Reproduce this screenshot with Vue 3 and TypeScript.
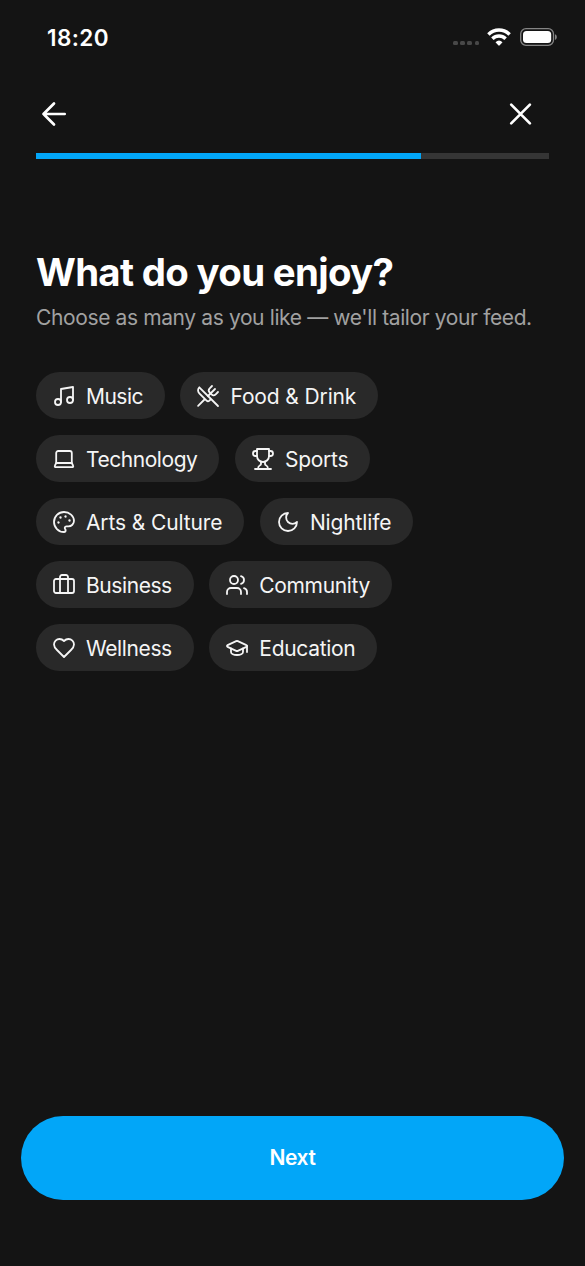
<script setup lang="ts">
interface Interest {
  label: string
  tracking: number
  paths: string[]
}

const rows: Interest[][] = [
  [
    {
      label: 'Music',
      tracking: -0.52,
      paths: ['M9 18V5l12-2v13', 'M3 18a3 3 0 1 0 6 0a3 3 0 1 0-6 0', 'M15 16a3 3 0 1 0 6 0a3 3 0 1 0-6 0'],
    },
    {
      label: 'Food & Drink',
      tracking: -0.13,
      paths: [
        'm16 2-2.3 2.3a3 3 0 0 0 0 4.2l1.8 1.8a3 3 0 0 0 4.2 0L22 8',
        'M15 15 3.3 3.3a4.2 4.2 0 0 0 0 6l7.3 7.3c.7.7 2 .7 2.8 0L15 15Zm0 0 7 7',
        'm2.1 21.8 6.4-6.3',
        'm19 5-7 7',
      ],
    },
  ],
  [
    {
      label: 'Technology',
      tracking: -0.45,
      paths: [
        'M6.2 4h11.6a2 2 0 0 1 2 2v10H4.2V6a2 2 0 0 1 2-2Z',
        'M4.2 16 2.9 18.7a1 1 0 0 0 .9 1.5h16.4a1 1 0 0 0 .9-1.5L19.8 16',
      ],
    },
    {
      label: 'Sports',
      tracking: -0.27,
      paths: [
        'M6 9H4.5a2.5 2.5 0 0 1 0-5H6',
        'M18 9h1.5a2.5 2.5 0 0 0 0-5H18',
        'M4 22h16',
        'M10 14.66V17c0 .55-.47.98-.97 1.21C7.85 18.75 7 20.24 7 22',
        'M14 14.66V17c0 .55.47.98.97 1.21C16.15 18.75 17 20.24 17 22',
        'M18 2H6v7a6 6 0 0 0 12 0V2Z',
      ],
    },
  ],
  [
    {
      label: 'Arts & Culture',
      tracking: -0.12,
      paths: [
        'M12 2C6.5 2 2 6.5 2 12s4.5 10 10 10c.926 0 1.648-.746 1.648-1.688 0-.437-.18-.835-.437-1.125-.29-.289-.438-.652-.438-1.125a1.64 1.64 0 0 1 1.668-1.668h1.996c3.051 0 5.555-2.503 5.555-5.554C21.965 6.012 17.461 2 12 2Z',
        'M13.2 6.5a.3.3 0 1 0 .6 0a.3.3 0 1 0-.6 0',
        'M17.2 10.5a.3.3 0 1 0 .6 0a.3.3 0 1 0-.6 0',
        'M8.2 7.5a.3.3 0 1 0 .6 0a.3.3 0 1 0-.6 0',
        'M6.2 12.5a.3.3 0 1 0 .6 0a.3.3 0 1 0-.6 0',
      ],
    },
    { label: 'Nightlife', tracking: -0.14, paths: ['M12 3a6 6 0 0 0 9 9 9 9 0 1 1-9-9Z'] },
  ],
  [
    {
      label: 'Business',
      tracking: -0.42,
      paths: [
        'M16 20V4a2 2 0 0 0-2-2h-4a2 2 0 0 0-2 2v16',
        'M4 6h16a2 2 0 0 1 2 2v10a2 2 0 0 1-2 2H4a2 2 0 0 1-2-2V8a2 2 0 0 1 2-2Z',
      ],
    },
    {
      label: 'Community',
      tracking: -0.34,
      paths: [
        'M16 21v-2a4 4 0 0 0-4-4H6a4 4 0 0 0-4 4v2',
        'M5 7a4 4 0 1 0 8 0a4 4 0 1 0-8 0',
        'M22 21v-2a4 4 0 0 0-3-3.87',
        'M16 3.13a4 4 0 0 1 0 7.75',
      ],
    },
  ],
  [
    {
      label: 'Wellness',
      tracking: -0.38,
      paths: [
        'M19 14c1.49-1.46 3-3.21 3-5.5A5.5 5.5 0 0 0 16.5 3c-1.76 0-3 .5-4.5 2-1.5-1.5-2.74-2-4.5-2A5.5 5.5 0 0 0 2 8.5c0 2.3 1.5 4.05 3 5.5l7 7Z',
      ],
    },
    {
      label: 'Education',
      tracking: -0.3,
      paths: [
        'M21.42 10.922a1 1 0 0 0-.019-1.838L12.83 5.18a2 2 0 0 0-1.66 0L2.6 9.08a1 1 0 0 0 0 1.832l8.57 3.908a2 2 0 0 0 1.66 0Z',
        'M22 10v6',
        'M6 12.5V16a6 3 0 0 0 12 0v-3.5',
      ],
    },
  ],
]

const progress = 75
</script>

<template>
  <main class="screen">
    <header class="status">
      <span class="time">18:20</span>
      <div class="indicators">
        <div class="dots"><i v-for="n in 4" :key="n"></i></div>
        <svg class="wifi" width="24" height="18" viewBox="0 0 24 18">
          <g fill="none" stroke="#fff" stroke-width="3.5">
            <path d="M1.4 6.4A15.2 15.2 0 0 1 22.6 6.4" />
            <path d="M5.4 10.8A9.4 9.4 0 0 1 18.6 10.8" />
          </g>
          <path d="M8.5 14.2A5.2 5.2 0 0 1 15.5 14.2L12.7 17.3Q12 18 11.3 17.3Z" fill="#fff" />
        </svg>
        <svg class="battery" width="38" height="18" viewBox="0 0 38 18">
          <rect x=".7" y=".7" width="32.8" height="16.6" rx="5.3" fill="none" stroke="#858585" stroke-width="1.3" />
          <rect x="3" y="3" width="28.2" height="12" rx="3.5" fill="#fff" />
          <path d="M35 6.2c2.4.8 2.4 4.8 0 5.6Z" fill="#858585" />
        </svg>
      </div>
    </header>

    <nav class="nav">
      <button class="icon-button" aria-label="Back">
        <svg width="36" height="36" viewBox="0 0 36 36"><path d="M18 7.5 7.5 18 18 28.5M7.5 18h21.2" /></svg>
      </button>
      <button class="icon-button" aria-label="Close">
        <svg width="36" height="36" viewBox="0 0 36 36"><path d="m8.2 8.6 18.7 18.8M26.9 8.6 8.2 27.4" /></svg>
      </button>
    </nav>

    <div class="track"><div class="bar" :style="{ width: progress + '%' }"></div></div>

    <section class="content">
      <h1>What do you enjoy?</h1>
      <p>Choose as many as you like — we'll tailor your feed.</p>
      <div class="rows">
        <div v-for="(row, i) in rows" :key="i" class="row">
          <button v-for="item in row" :key="item.label" class="chip">
            <svg width="24" height="24" viewBox="0 0 24 24">
              <path v-for="d in item.paths" :key="d" :d="d" />
            </svg>
            <span :style="{ letterSpacing: item.tracking + 'px' }">{{ item.label }}</span>
          </button>
        </div>
      </div>
    </section>

    <button class="next">Next</button>
  </main>
</template>

<style>
body {
  margin: 0;
  background: #141414;
}
</style>

<style scoped>
.screen {
  box-sizing: border-box;
  width: 585px;
  height: 1266px;
  display: flex;
  flex-direction: column;
  background: #141414;
  color: #fff;
  font-family: Inter, 'Liberation Sans', sans-serif;
  overflow: hidden;
}
button {
  border: 0;
  padding: 0;
  margin: 0;
  color: inherit;
  font-family: inherit;
  background: none;
}
svg {
  display: block;
  flex: none;
}
.status {
  display: flex;
  justify-content: space-between;
  height: 50px;
  padding: 24px 27px 0 47px;
  box-sizing: border-box;
}
.time {
  font-size: 22.5px;
  line-height: 27px;
  font-weight: 600;
  letter-spacing: 0.4px;
}
.indicators {
  display: flex;
  height: 26px;
  align-items: center;
}
.dots {
  display: flex;
  gap: 2.6px;
  margin: 12px 8px 0 0;
}
.dots i {
  width: 4.5px;
  height: 4.5px;
  border-radius: 1.5px;
  background: #484848;
}
.wifi {
  margin-right: 9px;
}
.nav {
  display: flex;
  justify-content: space-between;
  margin: 46px 46px 0 36px;
}
.icon-button {
  width: 36px;
  height: 36px;
}
.icon-button path {
  fill: none;
  stroke: #fff;
  stroke-width: 2.7;
  stroke-linecap: round;
  stroke-linejoin: round;
}
.track {
  height: 5.5px;
  margin: 21px 36px 0;
  background: #353535;
}
.bar {
  height: 100%;
  background: #02a6f8;
}
.content {
  padding: 0 36px;
  margin-top: 89.5px;
}
h1 {
  margin: 0;
  font-size: 38.4px;
  line-height: 48px;
  font-weight: 700;
  letter-spacing: -0.68px;
  white-space: nowrap;
}
p {
  margin: 7.5px 0 0;
  font-size: 21px;
  line-height: 28px;
  letter-spacing: -0.38px;
  color: #a1a1a1;
  white-space: nowrap;
}
.rows {
  display: flex;
  flex-direction: column;
  gap: 16px;
  margin-top: 40.5px;
}
.row {
  display: flex;
  gap: 15.5px;
}
.chip {
  display: flex;
  align-items: center;
  gap: 10px;
  height: 47px;
  padding: 0 22px 0 16px;
  border-radius: 24px;
  background: #292929;
  color: #f5f5f5;
  font-size: 21px;
  line-height: 28px;
  white-space: nowrap;
}
.chip span {
  padding-top: 2px;
}
.chip path {
  fill: none;
  stroke: currentColor;
  stroke-width: 1.8;
  stroke-linecap: round;
  stroke-linejoin: round;
}
.next {
  height: 84px;
  margin: auto 21px 66.5px;
  border-radius: 42px;
  background: #02a6f8;
  font-size: 21px;
  font-weight: 600;
  letter-spacing: -0.4px;
}
</style>
